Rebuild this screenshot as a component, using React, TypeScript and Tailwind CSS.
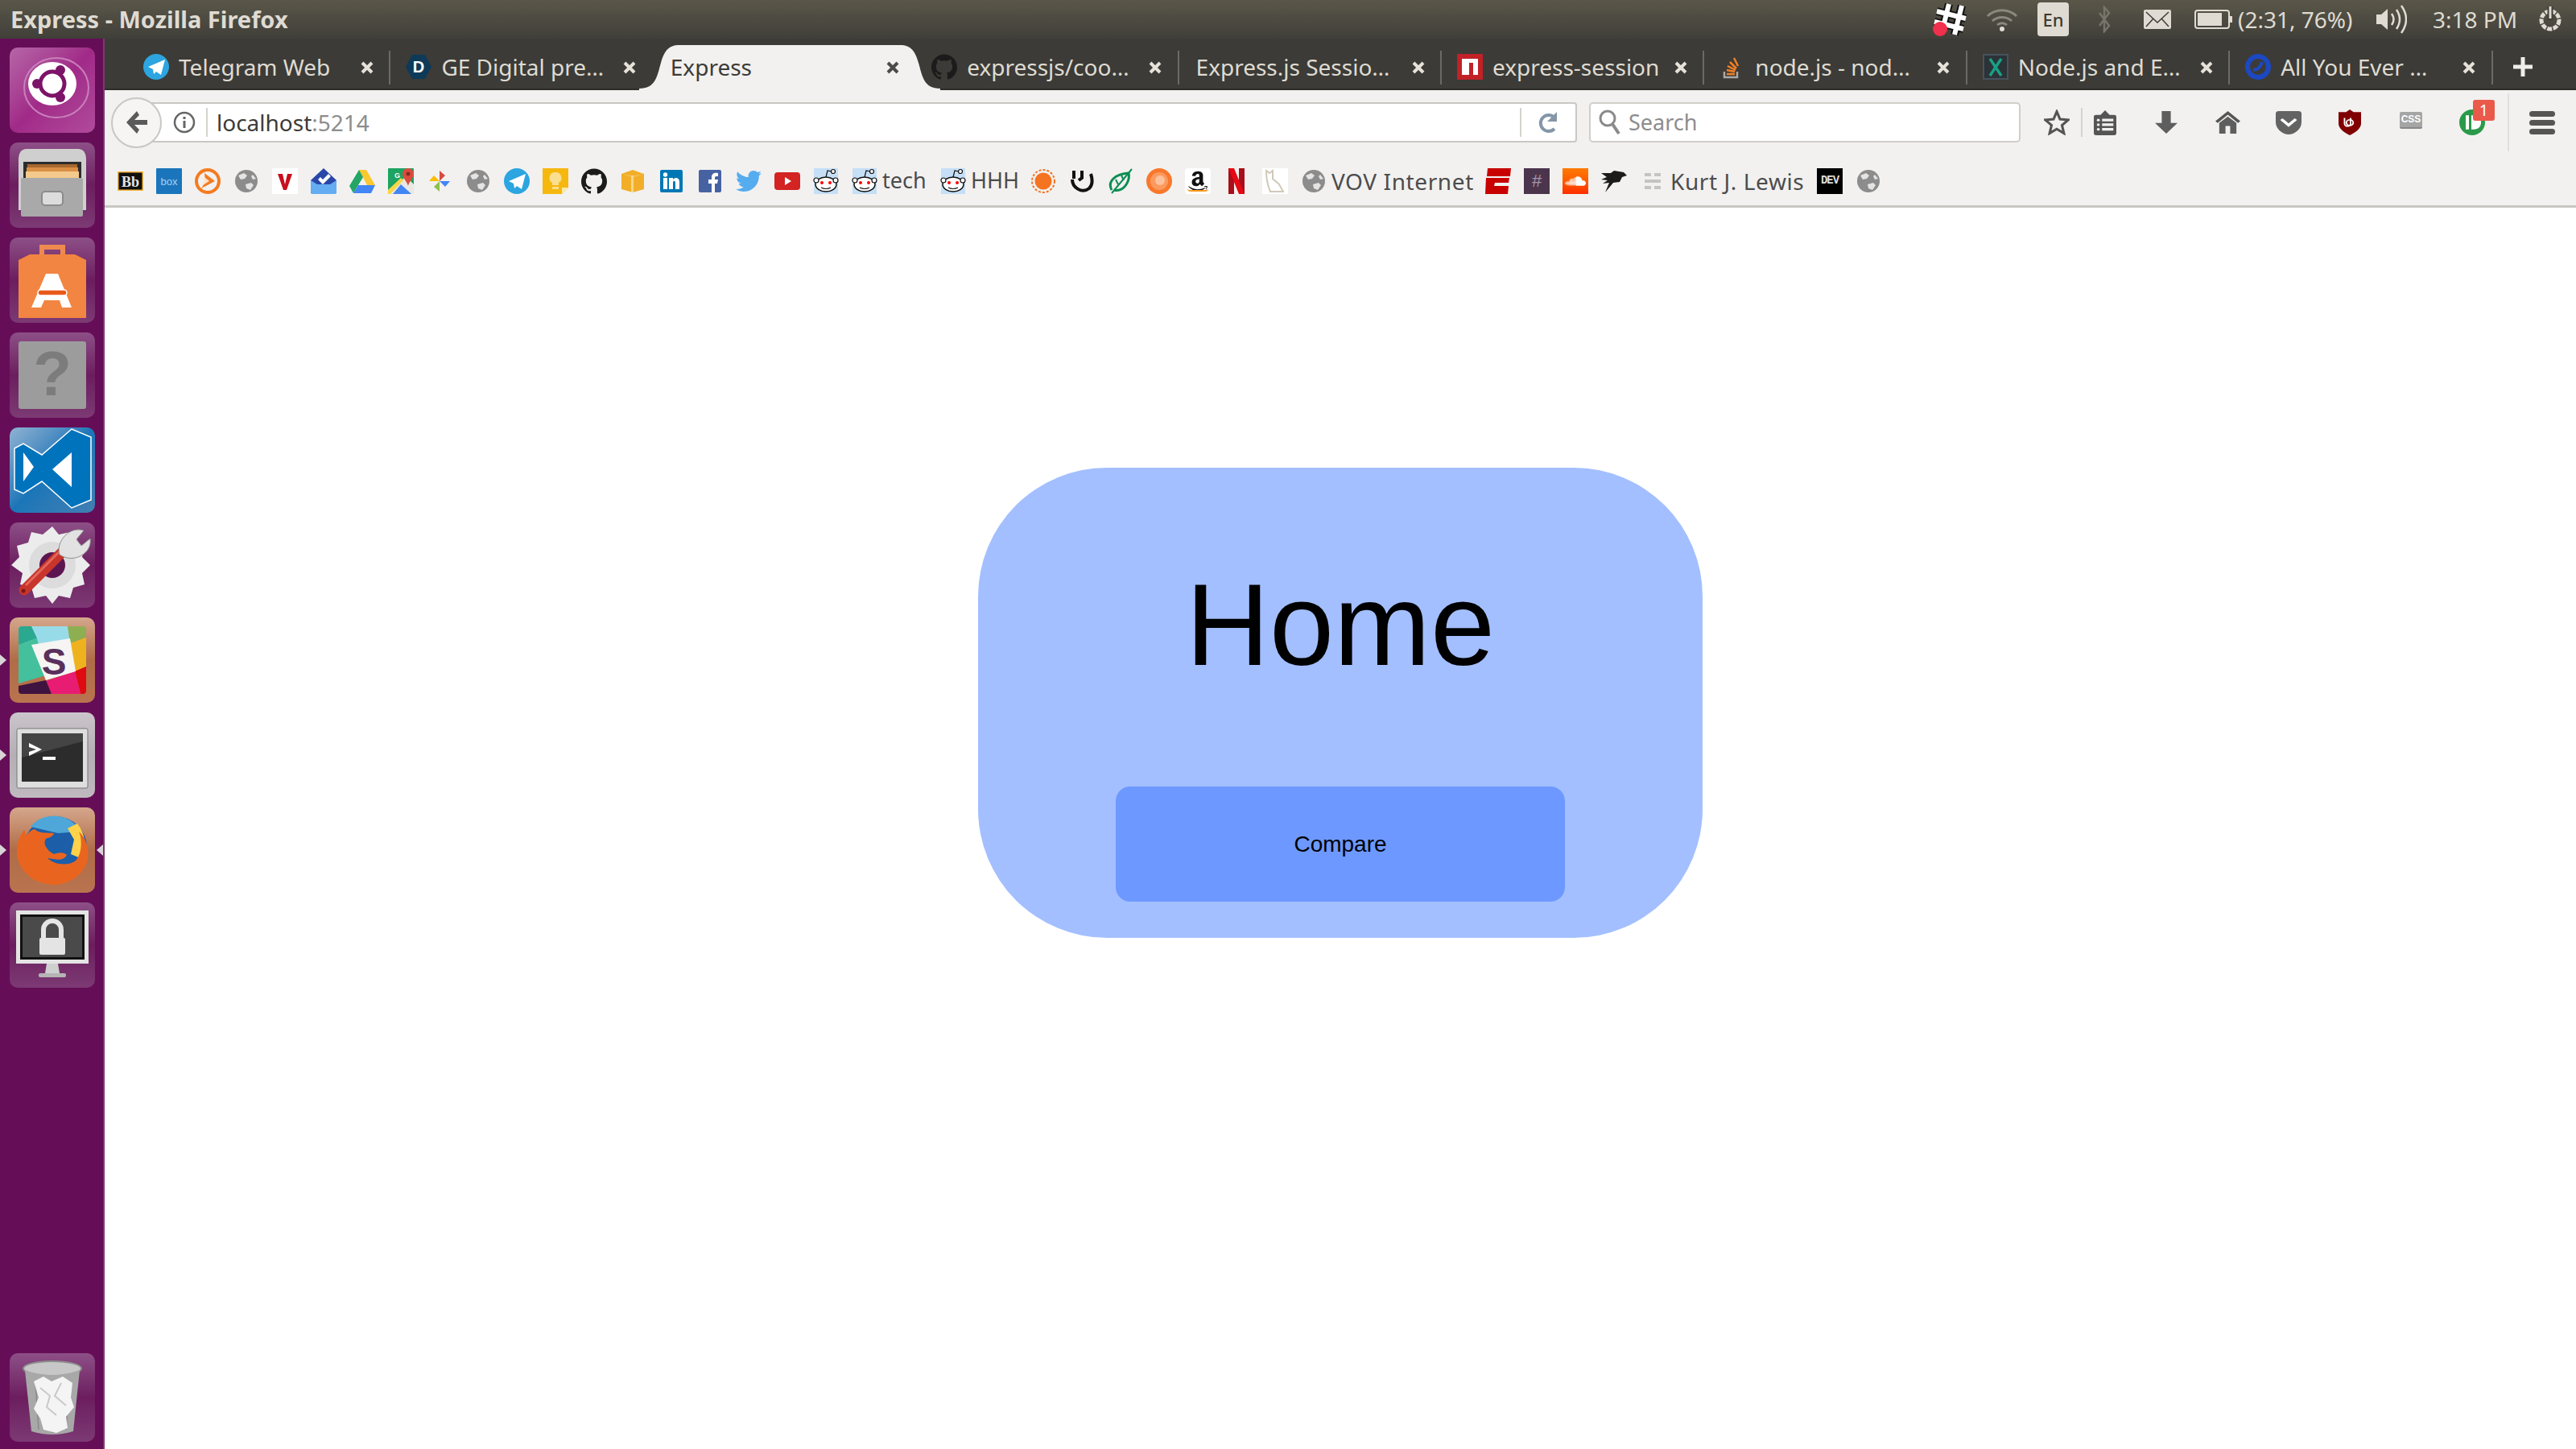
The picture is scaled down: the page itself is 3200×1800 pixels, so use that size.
import type { ReactNode } from 'react';
import { SiGithub } from 'react-icons/si';
import { FaTwitter, FaAmazon, FaSoundcloud } from 'react-icons/fa';

const Svg = ({ children, size = 32 }: { children: ReactNode; size?: number }) => (
  <svg width={size} height={size} viewBox="0 0 32 32" className="shrink-0">
    {children}
  </svg>
);

const Globe = () => (
  <Svg>
    <circle cx="16" cy="16" r="14" fill="#8c8c8c" />
    <path d="M6 9l7-3 4 3-3 4-5 1zM15 20l7-2 3 3-4 6-5-2zM24 8l4 5-4 1-2-4z" fill="#e4e4e4" />
  </Svg>
);

const Reddit = () => (
  <Svg>
    <rect x="1" y="0" width="30" height="32" fill="#c5dff7" />
    <ellipse cx="16" cy="20" rx="13" ry="9" fill="#fff" stroke="#111" strokeWidth="1.5" />
    <circle cx="4" cy="15" r="3" fill="#fff" stroke="#111" strokeWidth="1.2" />
    <circle cx="28" cy="15" r="3" fill="#fff" stroke="#111" strokeWidth="1.2" />
    <circle cx="25" cy="4" r="2.5" fill="#fff" stroke="#111" strokeWidth="1.2" />
    <path d="M16 11l2-8 5 1" fill="none" stroke="#111" strokeWidth="1.2" />
    <circle cx="11" cy="18" r="2" fill="#f00" />
    <circle cx="21" cy="18" r="2" fill="#f00" />
    <path d="M10 24q6 3 12 0" fill="none" stroke="#111" strokeWidth="1.2" />
  </Svg>
);

const TelegramFav = () => (
  <Svg>
    <circle cx="16" cy="16" r="16" fill="#2ca5e0" />
    <path d="M6 16L27 7l-5 19-6-4-3 3-1-6z" fill="#fff" />
  </Svg>
);

const GithubFav = () => <SiGithub size={32} color="#1b1b1b" className="shrink-0" />;

const bookmarks: { icon?: ReactNode; label?: string; labelWidth?: number; wide?: boolean }[] = [
  {
    icon: (
      <Svg>
        <rect y="4" width="32" height="24" fill="#f4b73f" />
        <rect x="1.5" y="5.5" width="29" height="21" fill="#111" />
        <text x="16" y="23" textAnchor="middle" fontSize="18" fontWeight="700" fill="#e6e6e6" fontFamily="Liberation Serif, serif">Bb</text>
      </Svg>
    ),
  },
  {
    icon: (
      <Svg>
        <rect width="32" height="32" rx="1" fill="#1a75bc" />
        <text x="16" y="21" textAnchor="middle" fontSize="13" fill="#a9d2ef" fontFamily="Liberation Sans, sans-serif">box</text>
      </Svg>
    ),
  },
  {
    icon: (
      <Svg>
        <circle cx="16" cy="16" r="14" fill="none" stroke="#f47b20" strokeWidth="4" />
        <path d="M12 6l13 10-17 9 5-8z" fill="#f47b20" />
        <path d="M12 11l6 5-8 5z" fill="#fde3cc" />
      </Svg>
    ),
  },
  { icon: <Globe /> },
  {
    icon: (
      <Svg>
        <rect width="32" height="32" fill="#fff" />
        <path d="M7 7h6l3 13 3-13h6l-7 20h-4z" fill="#c8101e" />
      </Svg>
    ),
  },
  {
    icon: (
      <Svg>
        <path d="M0 15L16 0l16 15v16H0z" fill="#2a47a8" />
        <path d="M9 14l3-3 3 3 7-7 3 3-10 10z" fill="#fff" />
        <path d="M0 15l8 5h16l8-5v15a2 2 0 01-2 2H2a2 2 0 01-2-2z" fill="#64adf2" />
      </Svg>
    ),
  },
  {
    icon: (
      <Svg>
        <path d="M12 2h9l11 19H22z" fill="#fbc82f" />
        <path d="M12 2L0 22l5 9 12-20z" fill="#23a566" />
        <path d="M5 31h22l5-10H11z" fill="#4285f4" />
      </Svg>
    ),
  },
  {
    icon: (
      <Svg>
        <rect width="32" height="32" rx="1" fill="#1da362" />
        <path d="M0 32l22-22 10 10v12z" fill="#e8e8e4" />
        <path d="M6 32l10-12 13 12z" fill="#4285f4" />
        <path d="M0 27L16 12l3 3L3 32H0z" fill="#f9d648" />
        <path d="M25 0a7 7 0 017 7c0 5-6 10-7 15-1-5-7-10-7-15a7 7 0 017-7z" fill="#dd4b3e" />
        <circle cx="25" cy="7" r="2.5" fill="#802d27" />
        <text x="8" y="12" fontSize="9" fontWeight="700" fill="#fff" fontFamily="Liberation Sans, sans-serif">G</text>
      </Svg>
    ),
  },
  {
    icon: (
      <Svg>
        <path d="M16 16V3l7 6z" fill="#d84b3f" />
        <path d="M16 16h13l-6 7z" fill="#4285f4" />
        <path d="M16 16v13l-7-6z" fill="#8bc34a" />
        <path d="M16 16H3l6-7z" fill="#fbbc05" />
      </Svg>
    ),
  },
  { icon: <Globe /> },
  { icon: <TelegramFav /> },
  {
    icon: (
      <Svg>
        <path d="M0 0h32v24l-8 8H0z" fill="#f6b80f" />
        <path d="M24 32v-8h8z" fill="#fbe9a8" />
        <path d="M16 5a7 7 0 00-4 13v3h8v-3a7 7 0 00-4-13z" fill="#fadf8e" />
        <rect x="12" y="23" width="8" height="3" fill="#fadf8e" />
      </Svg>
    ),
  },
  { icon: <GithubFav /> },
  {
    icon: (
      <Svg>
        <path d="M2 7l14-5 14 5v19l-14 4-14-4z" fill="#f2ae29" />
        <path d="M14 9h3v21h-3zM2 7l14 3 14-3-14 4z" fill="#f8d68b" />
      </Svg>
    ),
  },
  {
    icon: (
      <Svg>
        <rect x="2" y="2" width="28" height="28" rx="2" fill="#0077b5" />
        <rect x="6" y="12" width="5" height="14" fill="#fff" />
        <circle cx="8.5" cy="8" r="2.7" fill="#fff" />
        <path d="M13 12h5v2c2-3 8-3 8 3v9h-5v-8c0-3-3-3-3 0v8h-5z" fill="#fff" />
      </Svg>
    ),
  },
  {
    icon: (
      <Svg>
        <rect x="2" y="2" width="28" height="28" rx="2" fill="#4762a3" />
        <path d="M18 30V19h-4v-5h4v-3c0-4 3-6 8-5v4c-3 0-4 0-4 2v2h4l-1 5h-3v11z" fill="#fff" />
      </Svg>
    ),
  },
  { icon: <FaTwitter size={32} color="#55acee" className="shrink-0" /> },
  {
    icon: (
      <Svg>
        <rect y="5" width="32" height="22" rx="4" fill="#d32323" />
        <path d="M13 11l8 5-8 5z" fill="#fff" />
      </Svg>
    ),
  },
  { icon: <Reddit /> },
  { icon: <Reddit />, label: 'tech', labelWidth: 56 },
  { icon: <Reddit />, label: 'HHH', labelWidth: 58 },
  {
    icon: (
      <Svg>
        <circle cx="16" cy="16" r="10.5" fill="#f47421" />
        <circle cx="16" cy="16" r="14" fill="none" stroke="#f47421" strokeWidth="2" strokeDasharray="3 2" />
      </Svg>
    ),
  },
  {
    icon: (
      <Svg>
        <path d="M4 14c0 10 12 18 21 11 5-5 4-12 2-18" fill="none" stroke="#111" strokeWidth="4" />
        <path d="M6 3v10M16 3v9l-4 3" fill="none" stroke="#111" strokeWidth="4" />
      </Svg>
    ),
  },
  {
    icon: (
      <Svg>
        <path d="M5 27C-1 16 10 7 26 6 28 16 20 30 8 27" fill="none" stroke="#0c8d53" strokeWidth="3" />
        <path d="M5 31L30 1M10 14l3 6M17 9l3 6" fill="none" stroke="#0c8d53" strokeWidth="2" />
      </Svg>
    ),
  },
  {
    icon: (
      <Svg>
        <circle cx="16" cy="16" r="16" fill="#f9782c" />
        <circle cx="16" cy="16" r="11" fill="#fb9a5f" />
        <circle cx="17" cy="15" r="6" fill="#fcc19c" />
      </Svg>
    ),
  },
  {
    icon: (
      <span className="relative flex h-8 w-8 shrink-0 items-center justify-center rounded-sm bg-white">
        <FaAmazon size={28} color="#111" />
        <span className="absolute bottom-[3px] left-[3px] h-[4px] w-[26px] rounded-b-full border-b-2 border-[#f79b1f]" />
      </span>
    ),
  },
  {
    icon: (
      <Svg>
        <path d="M6 0h7v32H6zM19 0h7v32h-7z" fill="#a80f1a" />
        <path d="M6 0h7l13 32h-7z" fill="#e50914" />
      </Svg>
    ),
  },
  {
    icon: (
      <Svg>
        <rect width="32" height="32" fill="#fff" />
        <path d="M5 3l4 3 4-3v10l8 7 5 9H10C7 22 5 14 5 3z" fill="none" stroke="#cfc9b8" strokeWidth="2" />
      </Svg>
    ),
  },
  { icon: <Globe />, label: 'VOV Internet', labelWidth: 175, wide: true },
  {
    icon: (
      <Svg>
        <path d="M3 0h29l-1 10H2zM1 12h29l-1 6H12l-1 4h18l-1 10H0z" fill="#c80000" />
      </Svg>
    ),
  },
  {
    icon: (
      <span className="flex h-8 w-8 shrink-0 items-center justify-center bg-[#4b354c] font-['Liberation_Sans'] text-[22px] text-[#a893a8]">#</span>
    ),
  },
  {
    icon: (
      <span className="flex h-8 w-8 shrink-0 items-center justify-center bg-linear-to-b from-[#ff7a00] to-[#ff2a00]">
        <FaSoundcloud size={26} color="#fff" />
      </span>
    ),
  },
  {
    icon: (
      <Svg>
        <path d="M0 6h12l4-3 12 2 4 4-6 2-3 6-8 1-10 12 5-12-8 1 6-4-8-1 7-3z" fill="#1b1b1b" />
      </Svg>
    ),
  },
  {
    icon: (
      <span className="flex h-8 w-8 shrink-0 flex-col justify-center gap-[4px]">
        <span className="ml-[6px] h-[4px] w-[20px] border-x-8 border-[#c4c4c4]" />
        <span className="ml-[6px] h-[4px] w-[20px] bg-[#c4c4c4]" />
        <span className="ml-[6px] h-[4px] w-[20px] border-x-8 border-[#c4c4c4]" />
      </span>
    ),
    label: 'Kurt J. Lewis',
    labelWidth: 166,
    wide: true,
  },
  {
    icon: (
      <span className="flex h-8 w-8 shrink-0 items-center justify-center bg-black font-['Liberation_Mono'] text-[14px] font-bold tracking-[-1px] text-[#ddd]">DEV</span>
    ),
  },
  { icon: <Globe /> },
];

const tabs: { title: string; icon?: ReactNode; active?: boolean; sep?: boolean }[] = [
  { title: 'Telegram Web', icon: <TelegramFav />, sep: true },
  {
    title: 'GE Digital pre…',
    icon: (
      <Svg>
        <path d="M8 1h16l8 15-8 15H8L0 16z" fill="#0d3a58" />
        <text x="16" y="23" textAnchor="middle" fontSize="20" fontWeight="700" fill="#fff" fontFamily="Liberation Sans, sans-serif">D</text>
      </Svg>
    ),
  },
  { title: 'Express', active: true },
  { title: 'expressjs/coo…', icon: <GithubFav />, sep: true },
  { title: 'Express.js Sessio…', sep: true },
  {
    title: 'express-session',
    icon: (
      <Svg>
        <rect width="32" height="32" fill="#c12127" />
        <path d="M6 6h20v20h-6V11h-5v15H6z" fill="#fff" />
      </Svg>
    ),
    sep: true,
  },
  {
    title: 'node.js - nod…',
    icon: (
      <Svg>
        <path d="M6 22v7h16v-7" fill="none" stroke="#a8a8a8" strokeWidth="2.5" />
        <path d="M9 25h10M9 20l10 2M10 15l10 5M13 10l8 8M18 5l5 10" stroke="#f48024" strokeWidth="2.5" />
      </Svg>
    ),
    sep: true,
  },
  {
    title: 'Node.js and E…',
    icon: (
      <Svg>
        <rect x="1" y="1" width="30" height="30" fill="#2b3238" stroke="#46535c" strokeWidth="2" />
        <path d="M9 6l14 21M23 6L9 27" stroke="#18a085" strokeWidth="3.5" />
      </Svg>
    ),
    sep: true,
  },
  {
    title: 'All You Ever …',
    icon: (
      <Svg>
        <circle cx="16" cy="16" r="13" fill="none" stroke="#1c49c2" strokeWidth="6" />
        <path d="M10 20q8 0 11-10" fill="none" stroke="#1c49c2" strokeWidth="4" />
      </Svg>
    ),
    sep: true,
  },
];

// launcher tiles
const tileIdle = 'bg-linear-to-b from-[#8d4f87] via-[#6c1d5f] to-[#7c3a74]';

const launcher: { bg: string; pipLeft?: boolean; pipRight?: boolean; art: ReactNode }[] = [
  {
    bg: 'bg-linear-to-br from-[#b565a8] via-[#a12a88] to-[#b04a9b]',
    art: (
      <>
        <ellipse cx="58" cy="50" rx="40" ry="37" fill="none" stroke="#c880bb" strokeWidth="2" />
        <ellipse cx="53" cy="45" rx="30" ry="27" fill="#fff" />
        <circle cx="53" cy="45" r="15" fill="none" stroke="#7c1468" strokeWidth="5" />
        <circle cx="34" cy="45" r="6" fill="#7c1468" />
        <circle cx="63" cy="28" r="6" fill="#7c1468" />
        <circle cx="63" cy="62" r="6" fill="#7c1468" />
      </>
    ),
  },
  {
    bg: tileIdle,
    art: (
      <>
        <path d="M11 22q0-14 10-14h64q10 0 10 14v62H11z" fill="#cfcfcf" />
        <rect x="17" y="24" width="72" height="24" fill="#2c2c2c" />
        <rect x="22" y="27" width="62" height="5" fill="#a8672f" />
        <rect x="21" y="31" width="64" height="6" fill="#d98f45" />
        <rect x="20" y="36" width="66" height="10" fill="#f3c98c" />
        <rect x="14" y="44" width="77" height="48" rx="2" fill="#a9a9a9" />
        <rect x="40" y="61" width="26" height="17" rx="4" fill="#dcdcdc" stroke="#8b8b8b" strokeWidth="2" />
      </>
    ),
  },
  {
    bg: tileIdle,
    art: (
      <>
        <path d="M40 30V12h26v18" fill="none" stroke="#ee8a50" strokeWidth="6" />
        <path d="M11 28l14-7h56l14 7v72H11z" fill="#f28541" />
        <path d="M45 45h15l17 42H65l-3-9H43l-4 9H27z" fill="#fff" />
        <rect x="35" y="65" width="36" height="7" rx="3.5" fill="#e85a1c" stroke="#fff" strokeWidth="1.5" />
      </>
    ),
  },
  {
    bg: tileIdle,
    art: (
      <>
        <rect x="11" y="11" width="84" height="84" rx="3" fill="#9c9c9c" />
        <text x="53" y="78" textAnchor="middle" fontSize="78" fontWeight="700" fill="#7c7c7c" fontFamily="Liberation Sans, sans-serif">?</text>
      </>
    ),
  },
  {
    bg: 'bg-linear-to-br from-[#8fb3d2] via-[#1a76b8] to-[#417fb3]',
    art: (
      <>
        <path d="M6 26l11-6 23 14L77 2l24 10v78l-24 10-37-33-23 15-11-5z" fill="#0073bd" stroke="#fff" strokeWidth="1.5" />
        <path d="M17 31l13 18-13 18zM77 31v43L53 52z" fill="#fff" />
      </>
    ),
  },
  {
    bg: tileIdle,
    art: (
      <>
        <path d="M53 5l8 10 14-3 4 13 14 4-3 14 10 10-10 10 3 14-14 4-4 13-14-3-8 10-8-10-14 3-4-13-14-4 3-14L2 53l10-10-3-14 14-4 4-13 14 3z" fill="#ececec" />
        <circle cx="53" cy="53" r="29" fill="#dcdcdc" />
        <circle cx="53" cy="53" r="16" fill="#5d1552" />
        <path d="M18 84L70 32" stroke="#c8352b" strokeWidth="13" strokeLinecap="round" />
        <path d="M20 78L66 32" stroke="#e2675c" strokeWidth="3" />
        <circle cx="17" cy="85" r="2.5" fill="#7a1a14" />
        <path d="M62 40c-5-16 12-36 30-30l-9 11 6 8 11-9c3 18-20 32-38 20z" fill="#e2e2e2" stroke="#8f8f8f" strokeWidth="1" />
      </>
    ),
  },
  {
    bg: 'bg-linear-to-b from-[#d5a78c] via-[#b06c48] to-[#b9744f]',
    pipLeft: true,
    art: (
      <>
        <path d="M11 15a4 4 0 014-4h60l5 30-54 12z" fill="#98dbe8" />
        <path d="M17 11h10l7 15-23 8v-19a4 4 0 014-4z" fill="#2aa890" />
        <path d="M72 11h19a4 4 0 014 4v10l-20 7z" fill="#8eae52" />
        <path d="M75 32l20-7v36l-14 6z" fill="#efb21f" />
        <path d="M11 34l23-8 11 46-34 10z" fill="#44c09c" />
        <path d="M81 67l14-6v30a4 4 0 01-4 4h-3z" fill="#df0a12" />
        <path d="M45 79l36-12 7 28H52z" fill="#e81c72" />
        <path d="M11 85l34-7 7 17H15a4 4 0 01-4-4z" fill="#3e1340" />
        <path d="M27 34l48-8 7 41-37 11z" fill="#f6f5f3" />
        <text x="55" y="71" textAnchor="middle" fontSize="46" fontWeight="700" fill="#59305c" fontFamily="Liberation Sans, sans-serif">S</text>
      </>
    ),
  },
  {
    bg: 'bg-linear-to-b from-[#cbc5cb] via-[#b5afb5] to-[#c0bac0]',
    pipLeft: true,
    art: (
      <>
        <rect x="9" y="20" width="88" height="74" rx="2" fill="#dedede" stroke="#777" strokeWidth="1" />
        <rect x="15" y="26" width="76" height="60" fill="#2c2c2c" />
        <path d="M15 26h76v10L15 56z" fill="#444" />
        <path d="M24 38l16 8-16 8v-5l9-3-9-3z" fill="#fff" />
        <rect x="41" y="55" width="16" height="4" fill="#fff" />
      </>
    ),
  },
  {
    bg: 'bg-linear-to-b from-[#d5a78c] via-[#b06c48] to-[#b9744f]',
    pipLeft: true,
    pipRight: true,
    art: (
      <>
        <circle cx="57" cy="50" r="39" fill="#1d5ea8" />
        <path d="M26 24C40 5 75 5 88 30L60 32z" fill="#4ea7d8" />
        <path d="M84 20c10 12 12 30 6 44l-14-6 4-18-8-14z" fill="#ffd24a" />
        <path d="M56 96C28 96 8 76 9 52c1-12 6-20 9-24l3 7c3-5 8-8 10-8 6 6 16 4 24 5-2 6-7 5-10 7-4 5 0 14 10 19 6-2 12-3 16 1-4 9-16 5-24 4 8 8 24 10 34 4 8-6 10-26 5-37 9 8 13 22 11 33-3 20-24 33-41 33z" fill="#e9651f" />
      </>
    ),
  },
  {
    bg: tileIdle,
    art: (
      <>
        <rect x="8" y="10" width="90" height="66" fill="#e4e4e4" />
        <rect x="13" y="15" width="80" height="56" fill="#111" />
        <rect x="16" y="18" width="74" height="50" fill="#4a4a4a" />
        <path d="M42 46v-12a11 11 0 0122 0v12" fill="none" stroke="#e4e4e4" strokeWidth="6" />
        <rect x="37" y="44" width="32" height="21" rx="2" fill="#e4e4e4" />
        <path d="M46 76h14l2 12H44z" fill="#cfcfcf" />
        <rect x="36" y="88" width="34" height="5" rx="2" fill="#b5b5b5" />
      </>
    ),
  },
];

const Tile = ({ bg, pipLeft, pipRight, art }: { bg: string; pipLeft?: boolean; pipRight?: boolean; art: ReactNode }) => (
  <div className="relative ml-[12px] h-[106px] w-[106px]">
    {pipLeft && <span className="absolute -left-[12px] top-[46px] border-y-[7px] border-l-[8px] border-y-transparent border-l-[#d8d4d6]" />}
    {pipRight && <span className="absolute -right-[10px] top-[46px] border-y-[7px] border-r-[8px] border-y-transparent border-r-[#d8d4d6]" />}
    <div className={`h-full w-full overflow-hidden rounded-[10px] ${bg}`}>
      <svg width="106" height="106" viewBox="0 0 106 106">
        {art}
      </svg>
    </div>
  </div>
);

const Tab = ({ title, icon, active, sep }: { title: string; icon?: ReactNode; active?: boolean; sep?: boolean }) => (
  <div className="relative flex h-full w-[326.4px] shrink-0 items-center">
    {active && (
      <svg width="374" height="56" viewBox="0 0 374 56" className="absolute -left-[18px] top-0">
        <path d="M0 54c20 0 22-14 27-32C31 8 36 0 50 0h274c14 0 19 8 23 22 5 18 7 32 27 32v2H0z" fill="#f2f1f0" />
      </svg>
    )}
    <div className={`relative flex h-full w-full items-center ${icon ? 'pl-[19px]' : 'pl-[21px]'}`}>
      {icon}
      <span className={`whitespace-nowrap text-[28px] ${icon ? 'ml-[12px]' : ''} ${active ? 'text-[#3c3b37]' : 'text-[#dfdbd2]'}`}>{title}</span>
      <svg width="18" height="18" viewBox="0 0 18 18" className="absolute left-[288px] top-[19px]">
        <path d="M3 3l12 12M15 3L3 15" stroke={active ? '#4c4b47' : '#e6e2da'} strokeWidth="4" />
      </svg>
    </div>
    {sep && <span className="absolute right-0 top-[7px] h-[42px] w-[2px] bg-[#6b6a64]" />}
  </div>
);

const ToolSlot = ({ children }: { children: ReactNode }) => (
  <div className="flex h-full w-[76px] shrink-0 items-center justify-center">{children}</div>
);

export default function App() {
  return (
    <div className="flex h-[1800px] w-[3200px] flex-col overflow-hidden bg-white font-['Noto_Sans',sans-serif]">
      {/* Title bar */}
      <div className="flex h-[48px] shrink-0 items-center bg-linear-to-b from-[#5a5749] to-[#403f39] pl-[13px] text-[#dfdbd2]">
        <span className="text-[29px] font-bold">Express - Mozilla Firefox</span>
        <div className="ml-auto flex h-full items-center">
          <svg width="44" height="44" viewBox="0 0 44 44" className="mr-[22px]">
            <path d="M20 3l-9 36M36 5l-9 36M5 12l36 9M2 25l36 9" stroke="#111" strokeWidth="10" />
            <path d="M20 3l-9 36M36 5l-9 36M5 12l36 9M2 25l36 9" stroke="#fff" strokeWidth="6" />
            <circle cx="9" cy="34" r="9" fill="#f0304c" />
          </svg>
          <svg width="40" height="30" viewBox="0 0 40 30" className="mr-[24px]">
            <path d="M2 11a26 26 0 0136 0M8 17a18 18 0 0124 0M14 22a9 9 0 0112 0" fill="none" stroke="#8a887e" strokeWidth="3" />
            <circle cx="20" cy="27" r="3" fill="#dfdbd2" />
          </svg>
          <span className="mr-[36px] flex h-[42px] w-[39px] items-center justify-center rounded-[4px] bg-[#dfdbd2] text-[22px] font-medium text-[#3c3b37]">En</span>
          <svg width="16" height="34" viewBox="0 0 16 34" className="mr-[41px]">
            <path d="M2 9l12 16-6 7V2l6 7L2 25" fill="none" stroke="#77756b" strokeWidth="2.5" />
          </svg>
          <svg width="34" height="24" viewBox="0 0 34 24" className="mr-[29px]">
            <rect width="34" height="24" rx="2" fill="#dfdbd2" />
            <path d="M3 3l14 13L31 3M3 21l9-10M31 21l-9-10" fill="none" stroke="#3c3b37" strokeWidth="1.5" />
          </svg>
          <svg width="48" height="24" viewBox="0 0 48 24" className="mr-[6px]">
            <rect x="1" y="1" width="42" height="22" rx="3" fill="none" stroke="#dfdbd2" strokeWidth="2" />
            <rect x="4" y="4" width="30" height="16" fill="#dfdbd2" />
            <rect x="44" y="8" width="3" height="8" fill="#dfdbd2" />
          </svg>
          <span className="mr-[26px] w-[144px] whitespace-nowrap text-[28px]">(2:31, 76%)</span>
          <svg width="40" height="40" viewBox="0 0 40 40" className="mr-[32px]">
            <path d="M2 14h6l8-7v26l-8-7H2z" fill="#dfdbd2" />
            <path d="M21 13q5 7 0 14M27 8q8 12 0 24M33 3q12 17 0 34" fill="none" stroke="#dfdbd2" strokeWidth="2.5" />
          </svg>
          <span className="mr-[27px] w-[102px] whitespace-nowrap text-[28px]">3:18 PM</span>
          <svg width="34" height="36" viewBox="0 0 34 36" className="mr-[15px]">
            <circle cx="17" cy="19" r="11" fill="none" stroke="#dfdbd2" strokeWidth="5" strokeDasharray="6 1.5" />
            <path d="M17 2v17" stroke="#3f3e38" strokeWidth="7" />
            <path d="M17 2v15" stroke="#dfdbd2" strokeWidth="3" />
          </svg>
        </div>
      </div>

      <div className="flex min-h-0 flex-1">
        {/* Launcher */}
        <aside className="flex w-[130px] shrink-0 flex-col gap-[12px] border-r-2 border-[#7a3a70] bg-[#650e57] pb-[9px] pt-[11px]">
          {launcher.map((t, i) => (
            <Tile key={i} {...t} />
          ))}
          <div className="mt-auto ml-[12px] flex h-[110px] w-[106px] items-center justify-center rounded-[10px] bg-linear-to-b from-[#8d4f87] via-[#6c1d5f] to-[#7c3a74]">
            <svg width="90" height="100" viewBox="0 0 90 100">
              <ellipse cx="45" cy="14" rx="36" ry="9" fill="#c7c7c7" stroke="#8d8d8d" strokeWidth="2" />
              <path d="M11 16l8 76q26 8 52 0l8-76q-34 12-68 0z" fill="#a8a8a8" />
              <path d="M24 30l4 60M45 32v62M66 30l-4 60" stroke="#8a8a8a" strokeWidth="1.5" />
              <path d="M22 30l12-6 10 6 14-6 12 8-2 18 4 12-10 12 2 14-14 6-16-4-4-14-8-12 6-14z" fill="#f4f4f4" />
              <path d="M30 38l12 10-4 14 12 10M56 32l-8 16 14 12" fill="none" stroke="#c9c9c9" strokeWidth="2" />
            </svg>
          </div>
        </aside>

        <main className="flex min-w-0 flex-1 flex-col">
          {/* Tab strip */}
          <div className="flex h-[64px] shrink-0 items-center border-b-2 border-[#2d2c28] bg-[#3c3b37] pl-[29px] pt-[8px]">
            {tabs.map(t => (
              <Tab key={t.title} {...t} />
            ))}
            <svg width="28" height="28" viewBox="0 0 28 28" className="ml-[23px]">
              <path d="M14 2v24M2 14h24" stroke="#f0eee8" strokeWidth="5" />
            </svg>
          </div>

          {/* Nav bar */}
          <div className="flex h-[78px] shrink-0 items-center bg-[#f2f1f0] pl-[8px] pt-[2px]">
            <div className="relative z-10 flex h-[63px] w-[63px] shrink-0 items-center justify-center rounded-full border-2 border-[#c9c7c2] bg-[#f6f5f4]">
              <svg width="30" height="32" viewBox="0 0 30 32">
                <path d="M15 2L2 16l13 14 3-5-6-6h16v-6H12l6-6z" fill="#5a5a5a" />
              </svg>
            </div>
            <div className="-ml-[20px] flex h-[50px] w-[1778px] shrink-0 items-center rounded-r-[4px] border-2 border-l-0 border-[#c9c7c2] bg-white pl-[34px]">
              <svg width="28" height="28" viewBox="0 0 28 28" className="shrink-0">
                <circle cx="14" cy="14" r="12" fill="none" stroke="#666" strokeWidth="2.5" />
                <rect x="12.5" y="12" width="3" height="9" fill="#666" />
                <rect x="12.5" y="7" width="3" height="3" fill="#666" />
              </svg>
              <span className="ml-[13px] h-[36px] w-[2px] shrink-0 bg-[#d5d3ce]" />
              <span className="ml-[11px] text-[28px] text-[#3c3b37]">
                localhost<span className="text-[#8d8d8d]">:5214</span>
              </span>
              <span className="ml-auto h-[36px] w-[2px] shrink-0 bg-[#d5d3ce]" />
              <svg width="26" height="30" viewBox="0 0 26 30" className="ml-[20px] mr-[21px] shrink-0">
                <path d="M21 9a10 10 0 100 14" fill="none" stroke="#8496a8" strokeWidth="4" />
                <path d="M24 2v12H12z" fill="#8496a8" />
              </svg>
            </div>
            <div className="ml-[15px] flex h-[50px] w-[536px] shrink-0 items-center rounded-[5px] border-2 border-[#d0cec9] bg-white pl-[9px]">
              <svg width="30" height="34" viewBox="0 0 30 34" className="shrink-0">
                <circle cx="12" cy="12" r="9" fill="none" stroke="#8a8a8a" strokeWidth="3" />
                <path d="M18 19l8 12" stroke="#8a8a8a" strokeWidth="4" />
              </svg>
              <span className="ml-[8px] text-[27px] text-[#8d8d8d]">Search</span>
            </div>
            <div className="flex h-[40px] w-[75px] shrink-0 items-center justify-center pl-[14px]">
              <svg width="32" height="32" viewBox="0 0 36 36" preserveAspectRatio="none">
                <path d="M18 3l4.5 10.5 11.5 1-8.7 7.5 2.7 11.3-10-6-10 6 2.7-11.3L2 14.5l11.5-1z" fill="none" stroke="#555" strokeWidth="3.5" />
              </svg>
            </div>
            <span className="h-[36px] w-[2px] shrink-0 bg-[#d5d3ce]" />
            <div className="mr-[10px] flex h-[40px] w-[56px] shrink-0 items-center justify-center">
              <svg width="28" height="31" viewBox="0 0 30 38" preserveAspectRatio="none">
                <path d="M15 0l6 7h6a3 3 0 013 3v25a3 3 0 01-3 3H3a3 3 0 01-3-3V10a3 3 0 013-3h6z" fill="#555" />
                <path d="M11 13h15v4H11zM11 20h15v4H11zM11 27h15v4H11z" fill="#f2f1f0" />
                <circle cx="6" cy="15" r="2" fill="#f2f1f0" />
                <circle cx="6" cy="22" r="2" fill="#f2f1f0" />
                <circle cx="6" cy="29" r="2" fill="#f2f1f0" />
              </svg>
            </div>
            <ToolSlot>
              <svg width="28" height="28" viewBox="0 0 30 38" preserveAspectRatio="none">
                <path d="M9 0h12v20h9L15 38 0 20h9z" fill="#5e5e5e" />
              </svg>
            </ToolSlot>
            <ToolSlot>
              <svg width="31" height="28" viewBox="0 0 32 38" preserveAspectRatio="none">
                <path d="M16 0l16 17-3 3L16 6 3 20l-3-3z" fill="#555" />
                <path d="M16 9l11 11v18h-8V25h-6v13H5V20z" fill="#5e5e5e" />
              </svg>
            </ToolSlot>
            <ToolSlot>
              <svg width="32" height="29" viewBox="0 0 32 38" preserveAspectRatio="none">
                <path d="M0 4a4 4 0 014-4h24a4 4 0 014 4v14c0 12-9 20-16 20S0 30 0 18z" fill="#636363" />
                <path d="M7 13l9 10 9-10" fill="none" stroke="#fff" strokeWidth="4" />
              </svg>
            </ToolSlot>
            <ToolSlot>
              <svg width="28" height="32" viewBox="0 0 30 40" preserveAspectRatio="none">
                <path d="M15 0l5 4h10v18c0 8-8 14-15 18C8 36 0 30 0 22V4h10z" fill="#800000" />
                <path d="M8 13v9a4 4 0 008 0v-9M15 16a4.5 4.5 0 110 9 4.5 4.5 0 010-9z" fill="none" stroke="#fff" strokeWidth="2" />
              </svg>
            </ToolSlot>
            <ToolSlot>
              <span className="-mt-[6px] flex h-[21px] w-[28px] items-center justify-center rounded-[2px] border-b-2 border-[#888] bg-[#a5a5a5] font-['Liberation_Sans'] text-[12px] font-bold text-white">CSS</span>
            </ToolSlot>
            <ToolSlot>
              <div className="relative">
                <svg width="32" height="32" viewBox="0 0 32 40" preserveAspectRatio="none" className="block">
                  <ellipse cx="16" cy="20" rx="16" ry="20" fill="#2a9a49" />
                  <rect x="8" y="9" width="4" height="22" fill="#fff" />
                  <path d="M15 9h3c6 0 9 5 9 11s-3 11-9 11h-3z" fill="#fff" />
                </svg>
                <span className="absolute -right-[12px] -top-[12px] flex h-[26px] w-[27px] items-center justify-center rounded-[3px] bg-[#ea5a4a] text-[20px] text-white">1</span>
              </div>
            </ToolSlot>
            <span className="ml-[6px] h-[72px] w-[2px] shrink-0 bg-[#e2e0dc]" />
            <div className="flex h-[40px] w-[82px] shrink-0 flex-col items-center justify-center gap-[4px]">
              <span className="h-[7px] w-[32px] rounded-[4px] bg-[#555]" />
              <span className="h-[7px] w-[32px] rounded-[4px] bg-[#555]" />
              <span className="h-[7px] w-[32px] rounded-[4px] bg-[#555]" />
            </div>
          </div>

          {/* Bookmarks */}
          <div className="flex h-[68px] shrink-0 items-center border-b-[3px] border-[#c9c7c2] bg-[#f2f1f0] pl-[8px] pt-[4px]">
            {bookmarks.map((b, i) => (
              <div key={i} className="flex h-[32px] shrink-0 items-center justify-center px-[8px]">
                {b.icon}
                {b.label && (
                  <span style={{ width: b.labelWidth }} className={`ml-[6px] whitespace-nowrap text-[#4c4c4c] ${b.wide ? 'text-[28px] tracking-[0.6px]' : 'text-[27px]'}`}>{b.label}</span>
                )}
              </div>
            ))}
          </div>

          {/* Page */}
          <div className="flex-1 bg-white pt-[323px]">
            <div className="mx-auto flex h-[584px] w-[900px] flex-col items-center rounded-[160px] bg-[#a3bfff] pb-[45px] pt-[124px] font-['Liberation_Sans',sans-serif] text-black">
              <h1 className="text-[144px] leading-none">Home</h1>
              <button className="mt-auto h-[143px] w-[558px] rounded-[18px] bg-[#6d98ff] text-[28px]">Compare</button>
            </div>
          </div>
        </main>
      </div>
    </div>
  );
}
